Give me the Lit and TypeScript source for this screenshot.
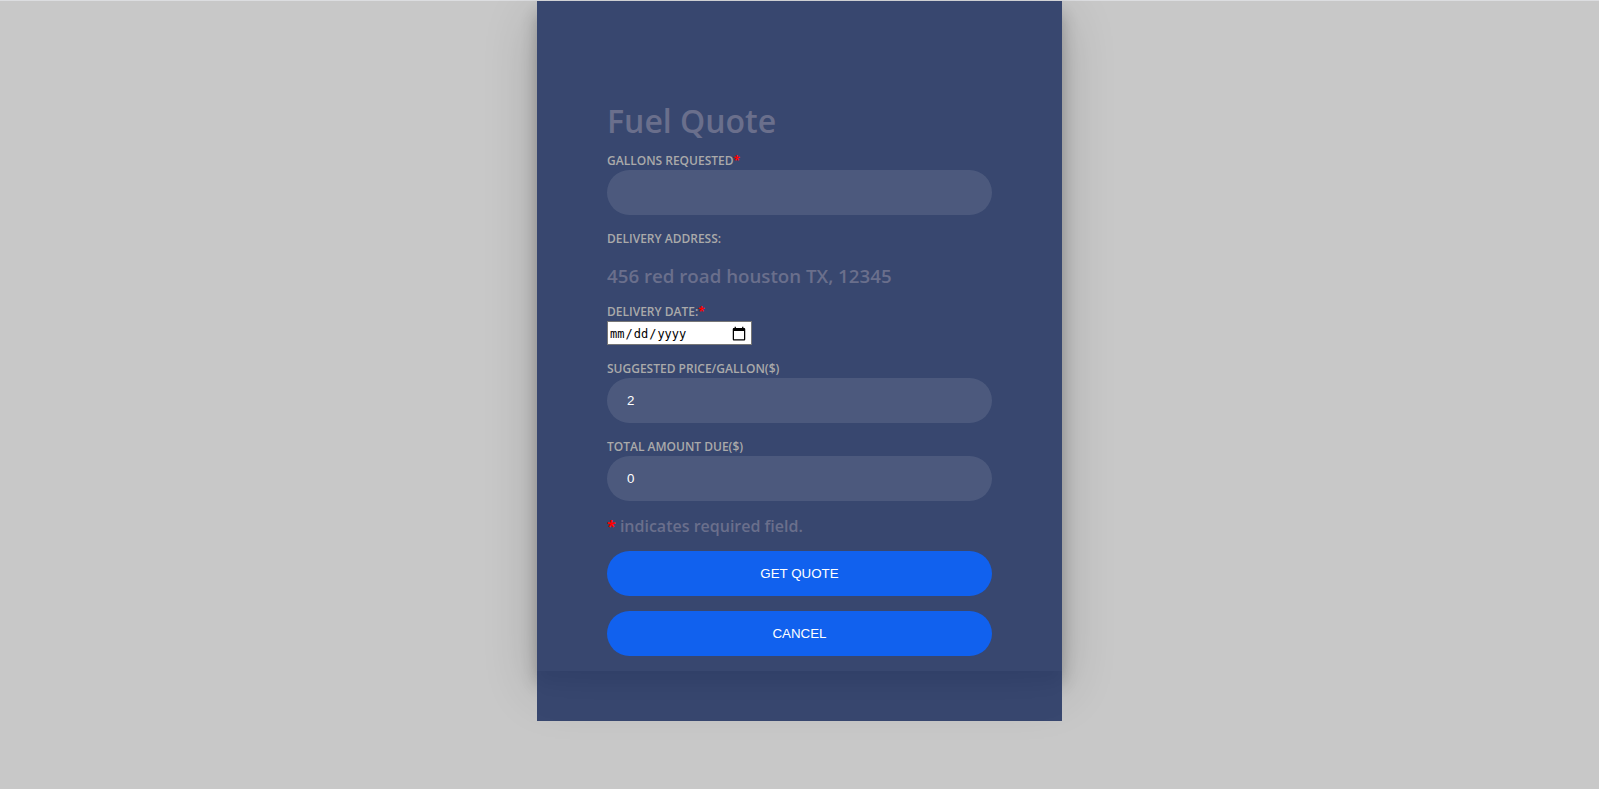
import { LitElement, html, css } from "lit";
import { customElement, state } from "lit/decorators.js";

@customElement("app-root")
export class AppRoot extends LitElement {
  static styles = css`
    :host {
      display: block;
      box-sizing: border-box;
      min-height: 100vh;
      border-top: 1px solid #dcdde0;
      background: #c8c8c8;
      color: #6a6f8c;
      font: 600 16px/18px "Open Sans", sans-serif;
    }
    *,
    *::before,
    *::after {
      box-sizing: border-box;
    }
    .wrap {
      max-width: 525px;
      margin: 0 auto;
    }
    .shade {
      box-shadow: 0 12px 15px 0 rgba(0, 0, 0, 0.24),
        0 17px 50px 0 rgba(0, 0, 0, 0.19);
    }
    .panel {
      padding: 100px 70px 15px;
      background: rgba(40, 57, 101, 0.9);
    }
    .foot {
      height: 50px;
      background: rgba(40, 57, 101, 0.9);
    }
    .title {
      margin: 0 0 11px;
      font-size: 32px;
      line-height: 40px;
      font-weight: 600;
    }
    .group {
      display: flex;
      flex-direction: column;
      align-items: flex-start;
      margin-bottom: 15px;
    }
    .label {
      color: #aaa;
      font-size: 12px;
      line-height: 18px;
      text-transform: uppercase;
    }
    .star {
      color: #f00;
      font-weight: 700;
    }
    .input,
    .button {
      display: block;
      width: 100%;
      height: 45px;
      padding: 0 20px;
      border: none;
      border-radius: 25px;
      background: rgba(255, 255, 255, 0.1);
      color: #fff;
      font-family: "Liberation Sans", Arial, sans-serif;
    }
    .button {
      margin-bottom: 15px;
      background: #1161ee;
      text-transform: uppercase;
      cursor: pointer;
    }
    .button:last-child {
      margin-bottom: 0;
    }
    .address {
      margin: 19px 0 3px;
      line-height: 18px;
      font-weight: 600;
    }
    .date {
      width: 145px;
      height: 24px;
      padding: 2px 2px 0 1px;
      border: 1px solid #767676;
      border-radius: 0;
      background: #fff;
      color: #000;
      font: 12px/18px "DejaVu Sans Mono", monospace;
    }
    .date::-webkit-calendar-picker-indicator {
      width: 16px;
      height: 16px;
      padding: 2px;
      box-sizing: content-box;
      margin-right: 0;
    }
    .hint {
      margin: 0 0 15px;
      line-height: 20px;
    }
  `;

  @state() private gallons = "";
  private price = 2;

  private onGallons(e: Event) {
    this.gallons = (e.target as HTMLInputElement).value;
  }

  render() {
    const total = (Number(this.gallons) || 0) * this.price;
    return html`
      <main class="wrap">
        <div class="shade">
          <form class="panel" @submit=${(e: Event) => e.preventDefault()}>
            <h1 class="title">Fuel Quote</h1>
            <div class="group">
              <label class="label" for="gallons">Gallons Requested<span class="star">*</span></label>
              <input class="input" id="gallons" type="text" inputmode="numeric" required
                .value=${this.gallons} @input=${this.onGallons} />
            </div>
            <div class="group">
              <span class="label">Delivery Address:</span>
              <h3 class="address">456 red road houston TX, 12345</h3>
            </div>
            <div class="group">
              <label class="label" for="date">Delivery Date:<span class="star">*</span></label>
              <input class="date" id="date" type="date" required />
            </div>
            <div class="group">
              <label class="label" for="price">Suggested Price/Gallon($)</label>
              <input class="input" id="price" type="text" readonly .value=${String(this.price)} />
            </div>
            <div class="group">
              <label class="label" for="total">Total Amount Due($)</label>
              <input class="input" id="total" type="text" readonly .value=${String(total)} />
            </div>
            <p class="hint"><span class="star">*</span> indicates required field.</p>
            <button class="button" type="submit">Get Quote</button>
            <button class="button" type="button">Cancel</button>
          </form>
        </div>
        <div class="foot"></div>
      </main>
    `;
  }
}
